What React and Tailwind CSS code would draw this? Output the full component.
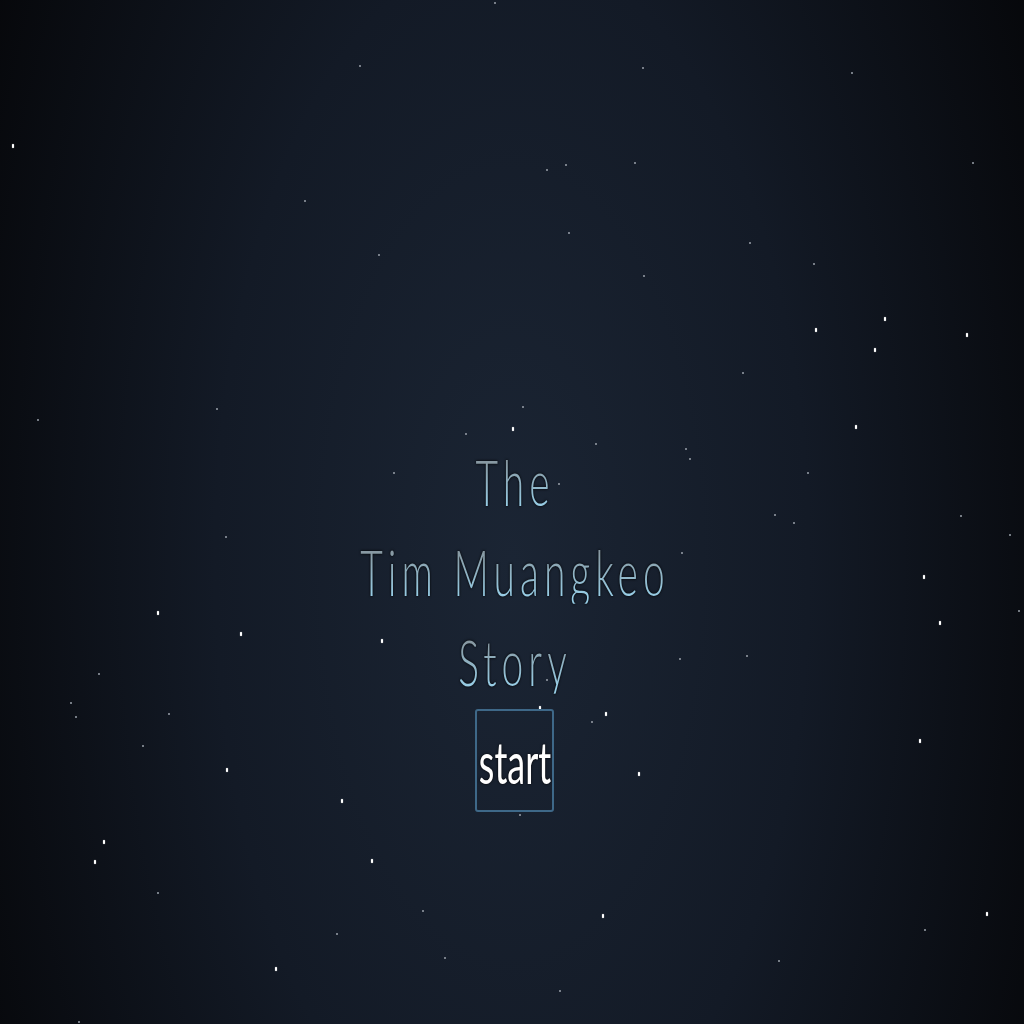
import React from "react";

const dim = [
  [495, 3], [360, 66], [305, 201], [379, 255], [217, 409], [38, 420], [466, 434], [394, 473],
  [643, 68], [852, 73], [547, 170], [566, 165], [635, 163], [973, 163], [569, 233], [750, 243],
  [814, 264], [644, 276], [743, 373], [523, 407], [596, 444], [686, 449], [690, 459], [808, 473],
  [559, 484], [226, 537], [99, 674], [71, 703], [76, 717], [169, 714], [143, 746], [158, 893],
  [423, 911], [337, 934], [445, 958], [79, 1022], [775, 515], [794, 523], [961, 516], [1010, 535],
  [682, 553], [1019, 611], [680, 659], [747, 656], [547, 680], [592, 722], [520, 815], [925, 930],
  [779, 961], [560, 991],
];

const bright = [
  [13, 146], [513, 429], [885, 319], [816, 330], [967, 335], [875, 350], [856, 427], [158, 613],
  [241, 634], [382, 641], [227, 770], [342, 801], [104, 842], [95, 862], [372, 861], [276, 969],
  [924, 577], [940, 623], [540, 708], [606, 714], [920, 741], [639, 774], [603, 916], [987, 914],
];

function TitleLine({ children }) {
  return (
    <div className="h-[90px] flex items-center justify-center pl-[6px]">
      <span className="inline-block scale-y-[1.6] text-[39px] leading-none font-light tracking-[5px] bg-[linear-gradient(to_bottom,#8797a0_15%,#98cfe8_90%)] bg-clip-text text-transparent drop-shadow-[0_0_1px_#000]">
        {children}
      </span>
    </div>
  );
}

export default function App() {
  return (
    <div className="relative w-full h-[1024px] overflow-hidden bg-[radial-gradient(ellipse_58%_120%_at_50%_55%,#1b2534_0%,#131a26_50%,#06070a_100%)] font-['Lato','Open_Sans',sans-serif]">
      {dim.map(([x, y], i) => (
        <div
          key={"d" + i}
          className="absolute w-[1.5px] h-[2px] rounded-full bg-[#9aa0aa]"
          style={{ left: x - 0.75, top: y - 1 }}
        />
      ))}
      {bright.map(([x, y], i) => (
        <div
          key={"b" + i}
          className="absolute w-[2.5px] h-[3.5px] rounded-full bg-white shadow-[0_0_1px_#fff]"
          style={{ left: x - 1.25, top: y - 1.75 }}
        />
      ))}

      <div className="relative flex flex-col items-center pt-[437px]">
        <TitleLine>The</TitleLine>
        <TitleLine>Tim Muangkeo</TitleLine>
        <TitleLine>Story</TitleLine>
        <div className="mt-[2px] ml-[5px] w-[79px] h-[103px] border-2 border-[#3e6888] rounded-[3px] flex items-center justify-center pt-[2px] pl-[1px]">
          <span className="inline-block scale-y-[1.6] text-[36px] leading-none text-white [text-shadow:0_0_2px_#000]">
            start
          </span>
        </div>
      </div>
    </div>
  );
}
